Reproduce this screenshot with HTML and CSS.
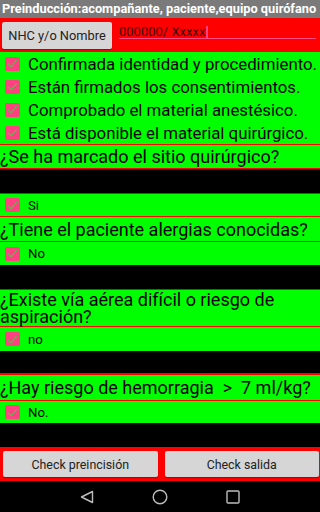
FILE: index.html
```html
<!DOCTYPE html>
<html lang="es">
<head>
<meta charset="utf-8">
<title>Preinducción</title>
<link rel="stylesheet" href="styles.css">
</head>
<body>
<div class="screen">
  <div class="title">Preinducción:acompañante, paciente,equipo quirófano</div>
  <div class="topbar">
    <div class="btn nhc">NHC y/o Nombre</div>
    <div class="edit"><span class="val">000000/ Xxxxx</span><span class="cursor"></span></div>
  </div>
  <div class="checks">
    <div class="crow"><span class="cb"></span><span>Confirmada identidad y procedimiento.</span></div>
    <div class="crow"><span class="cb"></span><span>Están firmados los consentimientos.</span></div>
    <div class="crow"><span class="cb"></span><span>Comprobado el material anestésico.</span></div>
    <div class="crow"><span class="cb"></span><span>Está disponible el material quirúrgico.</span></div>
  </div>
  <div class="q q1">¿Se ha marcado el sitio quirúrgico?</div>
  <div class="black b1"></div>
  <div class="ans a1"><span class="cb"></span><span>Si</span></div>
  <div class="q q2">¿Tiene el paciente alergias conocidas?</div>
  <div class="ans a2"><span class="cb"></span><span>No</span></div>
  <div class="black b2"></div>
  <div class="q q3">¿Existe vía aérea difícil o riesgo de aspiración?</div>
  <div class="ans a3"><span class="cb"></span><span>no</span></div>
  <div class="black b3"></div>
  <div class="q q4">¿Hay riesgo de hemorragia&nbsp; &gt;&nbsp; 7 ml/kg?</div>
  <div class="ans a4"><span class="cb"></span><span>No.</span></div>
  <div class="black b4"></div>
  <div class="bottombar">
    <div class="btn bbtn">Check preincisión</div>
    <div class="btn bbtn">Check salida</div>
  </div>
  <div class="nav">
    <svg class="nicon" width="14" height="14" viewBox="0 0 14 14"><path d="M12.5 1.5 L1.5 7 L12.5 12.5 Z" fill="none" stroke="#bdbdbd" stroke-width="1.4" stroke-linejoin="round"/></svg>
    <svg class="nicon" width="16" height="16" viewBox="0 0 16 16"><circle cx="8" cy="8" r="6.8" fill="none" stroke="#bdbdbd" stroke-width="1.4"/></svg>
    <svg class="nicon" width="14" height="14" viewBox="0 0 14 14"><rect x="1" y="1" width="12" height="12" rx="1" fill="none" stroke="#bdbdbd" stroke-width="1.4"/></svg>
  </div>
</div>
</body>
</html>
```
FILE: styles.css
```css
html, body {
  margin: 0;
  padding: 0;
  background: #000;
}
.screen {
  width: 320px;
  height: 512px;
  background: #ff0000;
  display: flex;
  flex-direction: column;
  font-family: Roboto, "Noto Sans", sans-serif;
  color: #000;
  overflow: hidden;
}
.title {
  height: 18px;
  background: #7a7a7a;
  color: #fff;
  font-weight: bold;
  font-size: 12.8px;
  line-height: 18px;
  padding-left: 2px;
  white-space: nowrap;
}
.topbar {
  height: 34px;
  display: flex;
  align-items: center;
  padding-left: 2px;
  gap: 7px;
}
.btn {
  background: #d6d6d6;
  border-radius: 2px;
  color: #222;
  display: flex;
  align-items: center;
  justify-content: center;
  box-shadow: 0 1px 1px rgba(0,0,0,0.3);
}
.nhc {
  width: 110px;
  height: 27px;
  font-size: 12.8px;
}
.edit {
  width: 197px;
  height: 27px;
  position: relative;
  font-size: 13px;
  color: #3a0000;
  display: flex;
  align-items: center;
  padding-left: 0;
  box-sizing: border-box;
}
.edit::after {
  content: "";
  position: absolute;
  left: 0;
  right: 0;
  bottom: 9.5px;
  height: 1.5px;
  background: #ff4d8a;
}
.edit .val {
  margin-top: -7px;
}
.cursor {
  display: inline-block;
  width: 1.5px;
  height: 12px;
  background: #ff4081;
  margin-left: 1px;
  margin-top: -7px;
}
.checks {
  height: 92px;
  background: #00ff00;
  display: flex;
  flex-direction: column;
}
.crow {
  height: 23px;
  display: flex;
  align-items: center;
  font-size: 16.8px;
  white-space: nowrap;
}
.cb {
  width: 15px;
  height: 14px;
  background: #ff4081;
  border-radius: 2px;
  margin: 0 8px 0 5px;
  flex: none;
  position: relative;
}
.cb::after {
  content: "";
  position: absolute;
  left: 4.5px;
  top: 1.5px;
  width: 4px;
  height: 7.5px;
  border-right: 1.6px solid #3fd23f;
  border-bottom: 1.6px solid #3fd23f;
  transform: rotate(40deg);
}
.q {
  background: #00ff00;
  font-size: 18px;
  line-height: 17px;
  display: flex;
  align-items: center;
  white-space: nowrap;
}
.q1 { margin-top: 1px; height: 23px; }
.q2 { margin-top: 1px; height: 24px; }
.q3 { margin-top: 1px; height: 36px; white-space: normal; padding-right: 20px; }
.q4 { margin-top: 2px; height: 25px; }
.ans {
  background: #00ff00;
  display: flex;
  align-items: center;
  font-size: 13.2px;
  margin-top: 1px;
}
.a1 { height: 22px; }
.a2 { height: 23px; }
.a3 { height: 24px; }
.a4 { height: 22px; }
.black { background: #000; }
.b1 { height: 24px; margin-top: 1px; }
.b2 { height: 24px; }
.b3 { height: 22px; }
.b4 { height: 24px; }
.bottombar {
  height: 34px;
  display: flex;
  align-items: center;
  padding: 0 1px 0 3px;
  gap: 7px;
}
.bbtn {
  flex: 1;
  height: 26px;
  font-size: 12.4px;
}
.nav {
  flex: 1;
  background: #000;
  display: flex;
  align-items: center;
  justify-content: center;
  gap: 58px;
}
```
